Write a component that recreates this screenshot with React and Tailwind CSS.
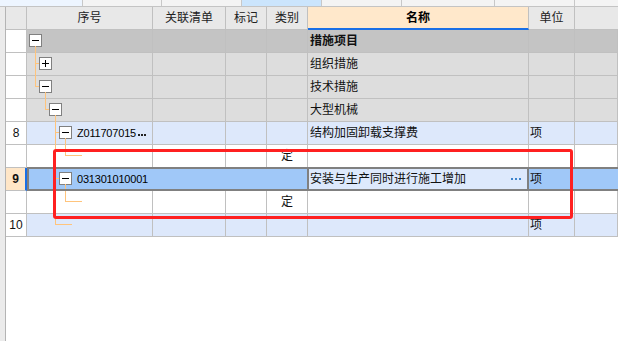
import React from "react";

const COLS = [21, 126, 73, 41, 41, 221, 46];
const LINE = "bg-[#ffc47c]";

const Box = ({ plus, left }) => (
  <div
    className="absolute top-[4px] w-[13px] h-[13px] border border-[#808080] bg-white flex items-center justify-center"
    style={{ left }}
  >
    <div className="relative w-[7px] h-[7px]">
      <div className="absolute left-0 top-[3px] w-[7px] h-px bg-black" />
      {plus && <div className="absolute top-0 left-[3px] w-px h-[7px] bg-black" />}
    </div>
  </div>
);

// tree connector segments, coordinates local to the 序号 cell
const V = ({ x, top = 0, h }) => (
  <div
    className={`absolute w-px ${LINE}`}
    style={h === undefined ? { left: x, top, bottom: -1 } : { left: x, top, height: h }}
  />
);
const H = ({ x, w }) => (
  <div className={`absolute top-[10px] h-px ${LINE}`} style={{ left: x, width: w }} />
);

const rows = [
  {
    bg: "bg-[#c4c4c4]",
    tree: (
      <>
        <Box left={2} />
        <V x={8} top={16} />
      </>
    ),
    name: "措施项目",
    bold: true,
  },
  {
    bg: "bg-[#dddddd]",
    tree: (
      <>
        <V x={8} />
        <H x={8} w={4} />
        <Box left={12} plus />
      </>
    ),
    name: "组织措施",
  },
  {
    bg: "bg-[#dddddd]",
    tree: (
      <>
        <V x={8} h={11} />
        <H x={8} w={4} />
        <Box left={12} />
        <V x={18} top={16} />
      </>
    ),
    name: "技术措施",
  },
  {
    bg: "bg-[#dddddd]",
    tree: (
      <>
        <V x={18} h={11} />
        <H x={18} w={4} />
        <Box left={22} />
        <V x={28} top={16} />
      </>
    ),
    name: "大型机械",
  },
  {
    num: "8",
    bg: "bg-[#dde8fb]",
    tree: (
      <>
        <V x={28} />
        <H x={28} w={4} />
        <Box left={32} />
        <V x={38} top={16} />
      </>
    ),
    code: "Z011707015",
    more: true,
    name: "结构加固卸载支撑费",
    unit: "项",
  },
  {
    bg: "bg-white",
    tree: (
      <>
        <V x={28} />
        <V x={38} h={11} />
        <H x={38} w={17} />
      </>
    ),
    kind: "定",
  },
  {
    num: "9",
    selected: true,
    bg: "bg-[#a0c8f8]",
    tree: (
      <>
        <V x={28} />
        <H x={28} w={4} />
        <Box left={32} />
        <V x={38} top={16} />
      </>
    ),
    code: "031301010001",
    name: "安装与生产同时进行施工增加",
    unit: "项",
  },
  {
    bg: "bg-white",
    tree: (
      <>
        <V x={28} />
        <V x={38} h={11} />
        <H x={38} w={17} />
      </>
    ),
    kind: "定",
  },
  {
    num: "10",
    bg: "bg-[#dde8fb]",
    tree: (
      <>
        <V x={28} h={11} />
        <H x={28} w={17} />
      </>
    ),
    unit: "项",
  },
];

const cell = "h-full border-r border-b border-[#c0c0c0] shrink-0";

const Dots = ({ color }) => (
  <span className="flex gap-[1px]">
    <span className={`w-[2px] h-[2px] ${color}`} />
    <span className={`w-[2px] h-[2px] ${color}`} />
    <span className={`w-[2px] h-[2px] ${color}`} />
  </span>
);

function Row({ r }) {
  const sel = r.selected;
  const inner = sel ? "h-full border-b border-transparent shrink-0" : cell;
  return (
    <div className="relative flex h-[23px]">
      <div
        className={`h-full shrink-0 border-b border-[#c0c0c0] flex items-center justify-center text-[12px] ${
          sel
            ? "bg-[#ffe6c7] font-bold border-r-2 border-r-[#1a6fe6]"
            : "bg-white border-r"
        }`}
        style={{ width: COLS[0] }}
      >
        {r.num}
      </div>
      <div className={`flex flex-1 ${r.bg}`}>
        <div className={`${inner} relative`} style={{ width: COLS[1] }}>
          {r.tree}
          {r.code && (
            <span className="absolute left-[50px] top-0 h-full flex items-center gap-[2px] text-[11px] tracking-[-0.2px] text-black">
              {r.code}
              {r.more && (
                <span className="mt-[3px]">
                  <Dots color="bg-[#222]" />
                </span>
              )}
            </span>
          )}
        </div>
        <div className={inner} style={{ width: COLS[2] }} />
        <div className={inner} style={{ width: COLS[3] }} />
        <div
          className={`${inner} flex items-center justify-center text-[12px]`}
          style={{ width: COLS[4] }}
        >
          {r.kind}
        </div>
        <div
          className={`${inner} flex items-center pl-[2px] text-[12px] ${r.bold ? "font-bold" : ""}`}
          style={{ width: COLS[5] }}
        >
          {!sel && r.name}
        </div>
        <div className={`${inner} flex items-center pl-px text-[12px]`} style={{ width: COLS[6] }}>
          {r.unit}
        </div>
        <div className={`${inner} flex-1`} />
      </div>
      {sel && (
        <>
          <div className="absolute left-[21px] -top-px -right-[3px] bottom-0 border-2 border-[#808080] pointer-events-none" />
          <div className="absolute left-[301px] -top-px w-[222px] bottom-0 border-2 border-[#808080] bg-[#dde9fc] flex items-center pl-[1px] text-[12px]">
            <span className="flex-1">{r.name}</span>
            <span className="mr-[6px]">
              <span className="flex gap-[2px]">
                <span className="w-[2px] h-[2px] bg-[#3c84cc]" />
                <span className="w-[2px] h-[2px] bg-[#3c84cc]" />
                <span className="w-[2px] h-[2px] bg-[#3c84cc]" />
              </span>
            </span>
          </div>
        </>
      )}
    </div>
  );
}

const tabs = [
  [83, "bg-[#edf5ff]"],
  [79, "bg-[#f4f4f4]"],
  [80, "bg-[#f4f4f4]"],
  [80, "bg-[#cbe5fd]"],
  [80, "bg-[#f4f4f4]"],
  [93, "bg-[#f4f4f4]"],
  [80, "bg-[#f4f4f4]"],
];

export default function App() {
  const headers = ["", "序号", "关联清单", "标记", "类别", "名称", "单位"];
  return (
    <div className="relative w-[618px] h-[341px] overflow-hidden bg-white text-[#111] font-['Liberation_Sans','Noto_Sans_CJK_SC',sans-serif]">
      <div className="flex h-[7px] border-b border-[#c4c4c4] bg-[#f4f4f4]">
        {tabs.map(([w, bg], i) => (
          <div key={i} className={`h-full shrink-0 border-r border-[#c8c8c8] ${bg}`} style={{ width: w }} />
        ))}
        <div className="flex-1" />
      </div>
      <div className="flex h-[334px]">
        <div className="w-[5px] shrink-0 bg-[#ebebeb]" />
        <div className="flex-1 border-l border-[#b4b4b4]">
          <div className="flex h-[23px] bg-[#e8e8e8] text-[12px] text-[#222]">
            {headers.map((h, i) => (
              <div
                key={i}
                className={`h-full shrink-0 border-r border-[#c0c0c0] flex items-center justify-center ${
                  h === "名称"
                    ? "bg-[#ffe8cb] font-bold text-black border-b-2 border-b-[#1a6fe6]"
                    : "border-b"
                }`}
                style={{ width: COLS[i] }}
              >
                {h}
              </div>
            ))}
            <div className="h-full flex-1 border-b border-[#c0c0c0]" />
          </div>
          {rows.map((r, i) => (
            <Row key={i} r={r} />
          ))}
        </div>
      </div>
      <div className="absolute left-[53px] top-[149px] w-[520px] h-[70px] border-[3px] border-[#ff2020] rounded-[3px] pointer-events-none" />
    </div>
  );
}
